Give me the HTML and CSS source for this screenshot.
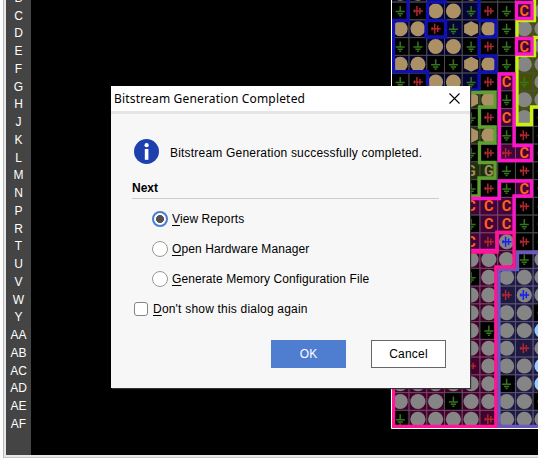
FILE: index.html
```html
<!DOCTYPE html>
<html lang="en">
<head>
<meta charset="utf-8">
<title>Bitstream Generation</title>
<link rel="stylesheet" href="styles.css">
</head>
<body>
<div class="pane">
  <div class="rows" id="rows"></div>
  <svg class="device" id="device" viewBox="31 0 507 455" width="507" height="455">
    <defs>
      <g id="ground"><path d="M0-5V0M-4.5 .5H4.5M-2.600 2.700H2.600M-1 4.700H1"/></g>
      <g id="clock"><path d="M-1-5V5M2-3.200V3.200M-4.500 0H5M-3.500-1.500V1.500"/></g>
    </defs>
    <g id="cells"></g>
    <g class="outline">
      <path class="blue" d="M408 0V20.5H393.5V71.7H427.5V90M427.5 2H445V0M427.5 2V20.5H445.5V37H426V20.5M479 0V20.5H496V37H479V56H496V72H479V90H462"/>
      <path class="green" d="M462 92.5H495V107H479.5V127H495V143H479.5V162.5H495V178H479V196H462"/>
      <path class="yellow" d="M534.5 0V20.5H517V37M538 37.5H534.500V55.500H517V124.500H531.500V107H538"/>
      <path class="magenta" d="M516.500 2.500H532V18.500H516.500ZM516.500 38.500H532V54H516.500ZM499.500 74H514V145.500H531.500V160.500H499.500ZM462 198.500H499.500V181H531.500V196H514V232.500H497V250.500H462"/>
      <path class="slate" d="M538 252.500H517.500V269.500H499V426.500H538"/>
      <path class="pink" d="M462 252H497V232.500H514V267H495.800V426.500H393.500V380"/>
    </g>
    <path class="edge" d="M391.500 0V428.500H538"/>
  </svg>
</div>
<section class="dialog">
  <header class="titlebar">
    <h1>Bitstream Generation Completed</h1>
    <svg class="close" width="11" height="11" viewBox="0 0 11 11"><path d="M.5.5 10.500 10.500M10.500.5.5 10.500"/></svg>
  </header>
  <div class="content">
    <div class="message">
      <svg width="25" height="25" viewBox="0 0 25 25"><circle class="info" cx="12.500" cy="12.500" r="12.500"/><circle class="mark" cx="12.600" cy="6.200" r="2.100"/><path class="mark" d="M10.800 10H14.400V20.800H10.800Z"/></svg>
      <p>Bitstream Generation successfully completed.</p>
    </div>
    <h2>Next</h2>
    <div class="options">
      <div class="option"><span class="radio selected"></span><span class="view"><u>V</u>iew Reports</span></div>
      <div class="option"><span class="radio"></span><span class="manager"><u>O</u>pen Hardware Manager</span></div>
      <div class="option"><span class="radio"></span><span class="memory"><u>G</u>enerate Memory Configuration File</span></div>
    </div>
    <div class="again"><span class="check"></span><span><u>D</u>on't show this dialog again</span></div>
    <div class="actions"><button class="ok">OK</button><button>Cancel</button></div>
  </div>
</section>
<script src="grid.js"></script>
</body>
</html>
```
FILE: styles.css
```css
* { box-sizing: border-box; }
body { margin: 0; width: 538px; height: 463px; overflow: hidden; background: #fff; font: 12px "Liberation Sans", Arial, sans-serif; color: #000; }
.pane { display: flex; margin-left: 3px; width: 535px; height: 458px; border-left: 1px solid #bbb; border-bottom: 1px solid #c8c8c8; padding: 0 0 2px 2px; background: #e8e8e8; overflow: hidden; }
.rows { flex: none; width: 25px; height: 455px; background: #444; color: #fff; text-align: center; overflow: hidden; padding-top: 7.5px; }
.rows span { display: block; height: 17.75px; line-height: 17.75px; font-size: 12px; }
.rows span:first-child { margin-top: -17.75px; }
.device { flex: none; display: block; background: #000; }
.outline path { fill: none; stroke-width: 3.300; }
.outline .blue { stroke: #1010b4; }
.outline .green { stroke: #60a030; }
.outline .yellow { stroke: #c8f010; }
.outline .magenta { stroke: #ff14cc; }
.outline .slate { stroke: #6c58bc; }
.outline .pink { stroke: #ff1493; }
.edge { fill: none; stroke: #fff; }
.cell { stroke: #4c4c4c; }
.black { fill: #000; }
.navy { fill: #050535; }
.moss { fill: #1c300a; }
.olive { fill: #465005; }
.plum { fill: #430239; stroke: #754770; }
.wine { fill: #43022d; stroke: #754764; }
.indigo { fill: #1e1940; stroke: #59547a; }
.tan { fill: #ac9165; }
.gray { fill: #858585; }
.sky { fill: #9acbfa; }
.gnd, .clk, .clkblue { fill: none; stroke-width: 1.500; }
.gnd { stroke: #36751f; }
.clk { stroke: #b0282e; }
.clkblue { stroke: #1520f0; }
.letter { font: bold 14.5px Roboto, sans-serif; fill: #ff6418; text-anchor: middle; }
.dark { fill: #a58a60; font-size: 14px; }
.dialog { position: absolute; left: 111px; top: 86px; width: 359px; height: 302px; background: #f7f7f7; box-shadow: 1px 1px 1px #333; }
.titlebar { display: flex; justify-content: space-between; align-items: center; height: 28px; padding: 0 10px 0 3px; background: #fff; border-bottom: 3px solid #e5e5e5; }
h1 { margin: 0; font: 12px "Noto Sans", sans-serif; letter-spacing: .17px; }
.close { fill: none; stroke: #000; stroke-width: 1.100; }
.content { padding: 25px 31px 0 21px; }
.message { display: flex; align-items: center; height: 25px; padding-left: 2px; gap: 11px; }
.message svg { flex: none; }
.message p { margin: 3px 0 0; white-space: nowrap; letter-spacing: .2px; }
.info { fill: #1e40af; }
.mark { fill: #fff; }
h2 { margin: 17px 0 0; height: 18px; line-height: 14px; border-bottom: 1px solid #ccc; font-size: 12px; }
.options { padding: 5px 0 0 20px; }
.option { display: flex; align-items: center; height: 30px; gap: 4px; white-space: nowrap; }
.view, .manager, .memory { letter-spacing: .09px; }
.radio { width: 16px; height: 16px; border: 1px solid #999; border-radius: 50%; background: #fff; }
.selected { border: 2px solid #4c7bd0; background: radial-gradient(circle, #505050 3.700px, #fff 4.300px); }
u { text-underline-offset: 2px; text-decoration-thickness: 1px; }
.again { display: flex; align-items: center; height: 30px; padding-left: 2px; gap: 5px; letter-spacing: .2px; }
.check { width: 14px; height: 14px; border: 1px solid #858585; border-radius: 3px; background: #fff; }
.actions { display: flex; justify-content: flex-end; gap: 25px; margin: 16px -7px 0 0; }
button { width: 75px; height: 28px; padding: 0; border: 1px solid #666; background: #fff; color: #000; font: 12px "Liberation Sans", sans-serif; letter-spacing: .2px; }
.ok { background: #4f7dd0; border-color: #4f7dd0; color: #fff; }
```
FILE: grid.js
```js
const labels = "B C D E F G H J K L M N P R T U V W Y AA AB AC AD AE AF".split(" ");
document.getElementById("rows").innerHTML = labels.map(l => `<span>${l}</span>`).join("");

// g ground, r clock, t tan block, h tan hexagon, o gray block, s sky block, b blue clock, C/G letters
const symbols = ["ttggtrgro", "grttgrgCo", "ttrghtgoo", "ggttgrgCo", "ttgghtgoo", "grttgrCgo",
  "....htgoo", "....grCor", "....htgrg", "....grrCr", "....GGgrg", "....grgCr", "....CCCrg", "....gCCgr",
  "....Crbrg", "....ooogo", "....goooo", "....oorbo", "....oooor", "....ogoos", "....oooros",
  "....rooos", "oooooogos", "ooogoooor", "goooorooo"];
// n navy, m moss, y olive, p plum, w wine, i indigo, k black
const fills = ["nnkknkkky", "kknnnkkpy", "nnknnnkyy", "kknnkkkpy", "nnkknnkyy", "kknnnkpyy",
  "kkkkmmkyy", "kkkkkkpyk", "kkkkmmkkk", "kkkkkkppk", "kkkkmmkkk", "kkkkkkkpk", "kkkkpppkk", "kkkkkppkk",
  "kkkkpppkk", "wwwwwwwki", "wwwwkwiii", "wwwwwwiii", "wwwwwwiik", "wwwwwkiii", "wwwwwwiii",
  "wwwwwwiii", "wwwwwwkii", "wwwkwwiik", "kwwwwwiii"];
const names = { n: "navy", m: "moss", y: "olive", p: "plum", w: "wine", i: "indigo", k: "black" };
const draw = {
  g: '<use href="#ground" class="gnd"/>',
  r: '<use href="#clock" class="clk"/>',
  t: '<circle class="tan" r="7.500"/>',
  h: '<path class="tan" d="M0-7.500 7-4V4L0 7.500-7 4V-4Z"/>',
  o: '<circle class="gray" r="7.600"/>',
  s: '<circle class="sky" r="7.600"/>',
  b: '<circle class="gray" r="7.600"/><use href="#clock" class="clkblue"/>',
  C: '<text class="letter" y="5.200">C</text>',
  G: '<text class="letter dark" y="5">G</text>',
  ".": ""
};
let out = "";
symbols.forEach((line, k) => [...line].forEach((s, c) => {
  const x = 400.2 + c * 17.73, y = 11 + (k - 1) * 17.75;
  out += `<g transform="translate(${x} ${y})"><rect class="cell ${names[fills[k][c]]}" x="-8.860" y="-8.870" width="17.730" height="17.750"/>${draw[s]}</g>`;
}));
document.getElementById("cells").innerHTML = out;
```
